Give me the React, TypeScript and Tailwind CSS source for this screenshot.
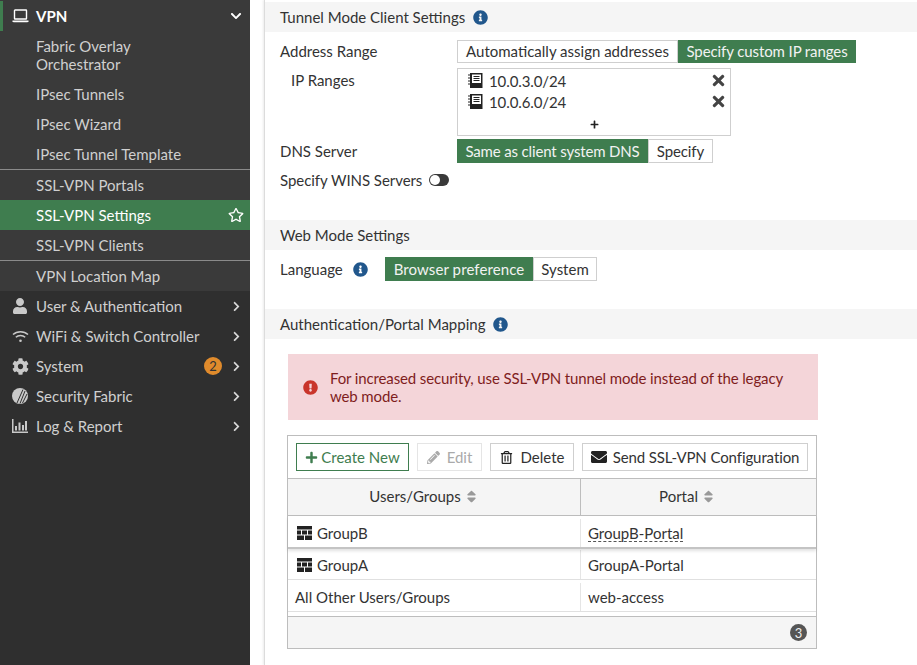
import type { ReactNode } from "react";
import {
  FaChevronDown,
  FaChevronRight,
  FaCog,
  FaEnvelope,
  FaExclamationCircle,
  FaInfoCircle,
  FaPencilAlt,
  FaPlus,
  FaRegStar,
  FaRegTrashAlt,
  FaSort,
  FaTimes,
  FaUser,
} from "react-icons/fa";

function LaptopIcon() {
  return (
    <svg width="17" height="14" viewBox="0 0 17 14" fill="none">
      <rect x="2.5" y="1" width="12" height="9" rx="0.5" stroke="currentColor" strokeWidth="1.4" />
      <path d="M0.5 11.5h16v0.8l-1 0.9h-14l-1-0.9z" fill="currentColor" />
    </svg>
  );
}

function WifiIcon() {
  return (
    <svg width="17" height="13" viewBox="0 0 17 13" fill="none" stroke="currentColor" strokeWidth="1.5">
      <path d="M1 4.500C5 0.800 12 0.800 16 4.500" />
      <path d="M3.800 7.300C6.400 5 10.600 5 13.200 7.300" />
      <circle cx="8.500" cy="10.800" r="1.300" fill="currentColor" stroke="none" />
    </svg>
  );
}

function FabricIcon() {
  return (
    <svg width="16" height="16" viewBox="0 0 16 16">
      <circle cx="8" cy="8" r="8" fill="#c9c9c9" />
      <path d="M5 15L11 1.500M8 15.500L13 3M10.500 15L15 6" stroke="#2f2f2f" strokeWidth="1" />
    </svg>
  );
}

function ReportIcon() {
  return (
    <svg width="16" height="14" viewBox="0 0 16 14" fill="currentColor">
      <path d="M0 0h1.500v12.500H16V14H0z" />
      <path d="M3 7h2v4.500H3zM6.500 3.500h2v8h-2zM10 6h2v5.500h-2zM13 2h2v9.500h-2z" />
    </svg>
  );
}

function BrickIcon() {
  return (
    <svg width="15" height="14" viewBox="0 0 15 14" fill="#222">
      <path d="M0 0h15v3.500H0zM0 4.500h4v4H0zM5 4.500h5v4H5zM11 4.500h4v4h-4zM0 9.500h7V14H0zM8 9.500h7V14H8z" />
    </svg>
  );
}

function AddressIcon() {
  return (
    <svg width="15" height="15" viewBox="0 0 15 15">
      <path d="M2 0h12.500v15H2z" fill="#222" />
      <path d="M4 1.500h9v8.500H4z" fill="#fff" />
      <path d="M5.500 3.500h6M5.500 5.500h6M5.500 7.500h6" stroke="#222" strokeWidth="1" />
      <path d="M0 2h2M0 5h2M0 8h2M0 11h2" stroke="#222" strokeWidth="1" />
    </svg>
  );
}

function SubItem({ children, active }: { children: ReactNode; active?: boolean }) {
  return (
    <div className={`flex h-[30px] items-center justify-between pl-9 pr-[6px] ${active ? "bg-[#3f7d4f] text-white" : ""}`}>
      <span>{children}</span>
      {active && <FaRegStar className="text-[16px]" />}
    </div>
  );
}

function MenuItem({ icon, label, badge }: { icon: ReactNode; label: string; badge?: boolean }) {
  return (
    <div className="flex h-[30px] items-center">
      <span className="flex w-9 justify-center pl-[4px] text-[#c9c9c9]">{icon}</span>
      <span className="flex-1">{label}</span>
      {badge && (
        <span className="mr-[9px] flex h-[18px] w-[18px] items-center justify-center rounded-full bg-[#e08b2c] text-[13px] text-[#333]">
          2
        </span>
      )}
      <FaChevronRight className="mr-[8px] text-[11px] text-[#d8d8d8]" />
    </div>
  );
}

function SectionHeader({ children, info }: { children: ReactNode; info?: boolean }) {
  return (
    <div className="flex h-[30px] items-center gap-[8px] bg-[#f5f5f5] pl-[15px]">
      <span>{children}</span>
      {info && <FaInfoCircle className="text-[15px] text-[#21578c]" />}
    </div>
  );
}

type ToggleItem = { label: string; className: string };

function Toggle({ items, active, height = "h-6" }: { items: ToggleItem[]; active: number; height?: string }) {
  return (
    <div className={`flex w-fit ${height}`}>
      {items.map((item, i) => (
        <div
          key={item.label}
          className={`flex items-center justify-center ${item.className} ${
            i === active ? "bg-[#3f7d4f] text-[#f2f2f2]" : "border border-[#cfcfcf] bg-white"
          }`}
        >
          {item.label}
        </div>
      ))}
    </div>
  );
}

function ToolButton({ children, className }: { children: ReactNode; className: string }) {
  return <div className={`flex h-7 items-center justify-center border ${className}`}>{children}</div>;
}

function IpRow({ ip }: { ip: string }) {
  return (
    <div className="flex h-[21px] items-center pl-[10px] pr-[3px]">
      <AddressIcon />
      <span className="ml-[6px] flex-1 tracking-[-0.1px]">{ip}</span>
      <FaTimes className="text-[17px] text-[#444]" />
    </div>
  );
}

export default function App() {
  return (
    <div className="flex h-[665px] w-[917px] overflow-hidden bg-white font-[Lato,sans-serif] text-[15px] leading-[18px] text-[#333]">
      {/* Sidebar */}
      <aside className="flex w-[250px] shrink-0 flex-col bg-[#2f2f2f] text-[#d0d0d0]">
        <div className="h-px bg-[#3a3a3a]" />
        <div className="bg-[#3a3a3a]">
          <div className="flex h-[30px] items-center border-l-[3px] border-[#3f7d4f] font-bold text-white">
            <span className="flex w-[33px] justify-center pl-[1px] text-white">
              <LaptopIcon />
            </span>
            <span className="flex-1">VPN</span>
            <FaChevronDown className="mr-[8px] text-[12px]" />
          </div>
          <div className="flex h-[48px] items-center pl-9">
            <span>
              Fabric Overlay
              <br />
              Orchestrator
            </span>
          </div>
          <SubItem>IPsec Tunnels</SubItem>
          <SubItem>IPsec Wizard</SubItem>
          <SubItem>IPsec Tunnel Template</SubItem>
          <div className="h-px bg-[#8a8a8a]" />
          <SubItem>SSL-VPN Portals</SubItem>
          <SubItem active>SSL-VPN Settings</SubItem>
          <SubItem>SSL-VPN Clients</SubItem>
          <div className="h-px bg-[#8a8a8a]" />
          <SubItem>VPN Location Map</SubItem>
        </div>
        <MenuItem icon={<FaUser className="text-[16px]" />} label="User & Authentication" />
        <MenuItem icon={<WifiIcon />} label="WiFi & Switch Controller" />
        <MenuItem icon={<FaCog className="text-[17px]" />} label="System" badge />
        <MenuItem icon={<FabricIcon />} label="Security Fabric" />
        <MenuItem icon={<ReportIcon />} label="Log & Report" />
      </aside>

      {/* Main */}
      <main className="ml-[14px] flex-1 border-l border-[#dcdcdc] pt-[2px] shadow-[-1px_0_2px_rgba(0,0,0,0.08)]">
        <SectionHeader info>Tunnel Mode Client Settings</SectionHeader>

        <div className="pl-[15px]">
          <div className="mt-2 flex items-center">
            <span className="w-[177px] pb-px">Address Range</span>
            <Toggle
              height="h-[23px]"
              items={[
                { label: "Automatically assign addresses", className: "w-[221px] pb-px" },
                { label: "Specify custom IP ranges", className: "w-[178px] pb-px tracking-[-0.1px]" },
              ]}
              active={1}
            />
          </div>
          <div className="mt-[5px] flex items-start">
            <span className="w-[177px] pl-[11px] pt-[3px]">IP Ranges</span>
            <div className="h-[68px] w-[274px] border border-[#cfcfcf] pt-[1px]">
              <IpRow ip="10.0.3.0/24" />
              <IpRow ip="10.0.6.0/24" />
              <div className="flex h-[23px] items-center justify-center pt-[2px]">
                <FaPlus className="text-[9px] text-[#222]" />
              </div>
            </div>
          </div>
          <div className="mt-[3px] flex items-center">
            <span className="w-[177px]">DNS Server</span>
            <Toggle
              items={[
                { label: "Same as client system DNS", className: "w-[191px] tracking-[-0.15px]" },
                { label: "Specify", className: "w-[65px] tracking-[-0.1px]" },
              ]}
              active={0}
            />
          </div>
          <div className="mt-[8px] flex h-[18px] items-center">
            <span className="tracking-[-0.05px]">Specify WINS Servers</span>
            <div className="ml-[7px] flex h-[12px] w-[20px] items-center rounded-full bg-[#3a3a3a] pl-px">
              <div className="h-[10px] w-[10px] rounded-full bg-white" />
            </div>
          </div>
        </div>

        <div className="mt-[31px]">
          <SectionHeader>Web Mode Settings</SectionHeader>
        </div>
        <div className="mt-[7px] flex items-center pl-[15px]">
          <span className="flex w-[105px] items-center gap-[10px]">
            Language
            <FaInfoCircle className="text-[15px] text-[#21578c]" />
          </span>
          <Toggle
            items={[
              { label: "Browser preference", className: "w-[148px] tracking-[0.1px]" },
              { label: "System", className: "w-[64px]" },
            ]}
            active={0}
          />
        </div>

        <div className="mt-[28px]">
          <SectionHeader info>Authentication/Portal Mapping</SectionHeader>
        </div>

        {/* Alert */}
        <div className="ml-[23px] mt-[15px] flex h-[66px] w-[530px] items-center bg-[#f4d5d9] pl-[15px] pr-[20px] text-[#7f1d1d]">
          <FaExclamationCircle className="shrink-0 text-[15px] text-[#c9352b]" />
          <span className="ml-[12px] tracking-[-0.13px]">
            For increased security, use SSL-VPN tunnel mode instead of the legacy web mode.
          </span>
        </div>

        {/* Table */}
        <div className="ml-[22px] mt-[15px] w-[530px] border border-[#bdbdbd]">
          <div className="flex h-[42px] items-center gap-2 pl-2">
            <ToolButton className="w-[113px] gap-[3px] border-[#3f7d4f] text-[#3f7d4f]">
              <FaPlus className="text-[13px]" />
              Create New
            </ToolButton>
            <ToolButton className="w-[65px] gap-[7px] border-[#e5e5e5] text-[#aaa]">
              <FaPencilAlt className="text-[13px]" />
              Edit
            </ToolButton>
            <ToolButton className="w-[84px] gap-[8px] border-[#cfcfcf]">
              <FaRegTrashAlt className="text-[13px] text-[#222]" />
              Delete
            </ToolButton>
            <ToolButton className="w-[226px] gap-[6px] border-[#cfcfcf] tracking-[-0.1px]">
              <FaEnvelope className="text-[16px] text-[#222]" />
              Send SSL-VPN Configuration
            </ToolButton>
          </div>
          <div className="grid h-[38px] grid-cols-[293px_1fr] border-y border-[#bdbdbd] bg-[#f5f5f5]">
            <div className="flex items-center justify-center gap-[3px] border-r border-[#bdbdbd] pb-[2px] pr-[20px]">
              Users/Groups <FaSort className="text-[15px] text-[#999]" />
            </div>
            <div className="flex items-center justify-center gap-[3px] pb-[2px] pr-[22px]">
              Portal <FaSort className="text-[15px] text-[#999]" />
            </div>
          </div>
          <div className="relative grid h-[33px] grid-cols-[293px_1fr] border-b-2 border-[#c4c4c4] pt-[3px] shadow-[0_2px_3px_rgba(0,0,0,0.12)]">
            <div className="flex items-center gap-[5px] border-r border-[#e5e5e5] pl-[9px]">
              <BrickIcon />
              GroupB
            </div>
            <div className="flex items-center pl-[7px]">
              <span className="border-b border-dashed border-[#555] leading-[16px]">GroupB-Portal</span>
            </div>
          </div>
          <div className="grid h-[31px] grid-cols-[293px_1fr] border-b border-[#e0e0e0] pt-px">
            <div className="flex items-center gap-[5px] border-r border-[#e5e5e5] pl-[9px]">
              <BrickIcon />
              GroupA
            </div>
            <div className="flex items-center pl-[7px]">GroupA-Portal</div>
          </div>
          <div className="grid h-[32px] grid-cols-[293px_1fr] border-b border-[#e0e0e0] pt-[3px]">
            <div className="flex items-center border-r border-[#e5e5e5] pl-[7px]">All Other Users/Groups</div>
            <div className="flex items-center pl-[7px]">web-access</div>
          </div>
          <div className="mt-[4px] flex h-[32px] items-center justify-end border-t border-[#bdbdbd] bg-[#f5f5f5] pr-[9px]">
            <span className="flex h-[17px] w-[17px] items-center justify-center rounded-full bg-[#555] text-[13px] text-[#eee]">3</span>
          </div>
        </div>
      </main>
    </div>
  );
}
